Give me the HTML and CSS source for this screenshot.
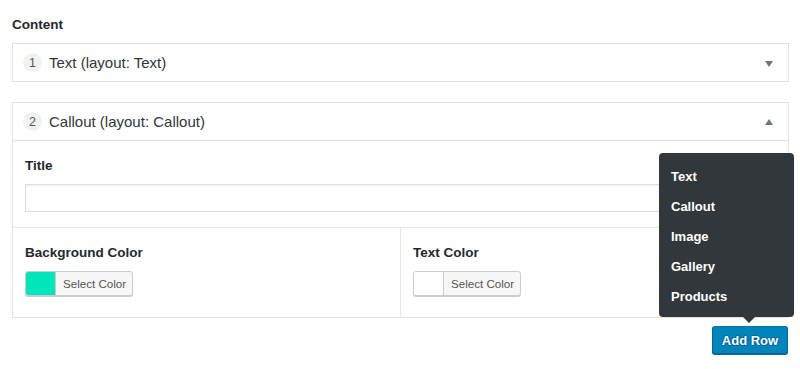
FILE: index.html
```html
<!DOCTYPE html>
<html>
<head>
<meta charset="utf-8">
<link rel="stylesheet" href="styles.css">
</head>
<body>
<div class="wrap">
  <div class="field-label">Content</div>

  <div class="layout">
    <div class="layout-head">
      <span class="order">1</span>
      <span class="layout-title">Text (layout: Text)</span>
      <span class="toggle down"></span>
    </div>
  </div>

  <div class="layout open">
    <div class="layout-head">
      <span class="order">2</span>
      <span class="layout-title">Callout (layout: Callout)</span>
      <span class="toggle up"></span>
    </div>
    <div class="sub-field">
      <div class="sub-label">Title</div>
      <input class="text-input" type="text">
    </div>
    <div class="sub-row">
      <div class="sub-field col">
        <div class="sub-label">Background Color</div>
        <button class="color-btn"><span class="swatch teal"></span><span class="color-text">Select Color</span></button>
      </div>
      <div class="sub-field col col-right">
        <div class="sub-label">Text Color</div>
        <button class="color-btn"><span class="swatch"></span><span class="color-text">Select Color</span></button>
      </div>
    </div>
  </div>

  <div class="actions">
    <div class="add-wrap">
      <ul class="popup">
        <li>Text</li>
        <li>Callout</li>
        <li>Image</li>
        <li>Gallery</li>
        <li>Products</li>
      </ul>
      <span class="popup-arrow"></span>
      <button class="add-row">Add Row</button>
    </div>
  </div>
</div>
</body>
</html>
```

FILE: styles.css
```css
* { box-sizing: border-box; }
html, body { margin: 0; padding: 0; background: #fff; }
body {
  font-family: "Liberation Sans", Arial, sans-serif;
  color: #23282d;
  width: 800px;
  height: 369px;
  overflow: hidden;
}
.wrap {
  padding: 16px 12px 0 12px;
  width: 789px;
}
.field-label {
  font-size: 13.5px;
  font-weight: bold;
  line-height: 18px;
  margin-bottom: 9px;
  color: #23282d;
}
.layout {
  border: 1px solid #e1e1e1;
  background: #fff;
  width: 777px;
}
.layout + .layout { margin-top: 20px; }
.layout-head {
  height: 37px;
  display: flex;
  align-items: center;
  padding-left: 10px;
  padding-right: 15px;
  font-size: 15px;
  color: #32373c;
}
.open .layout-head { border-bottom: 1px solid #e1e1e1; height: 38px; }
.order {
  width: 19px;
  height: 19px;
  border-radius: 50%;
  background: #f1f1f1;
  color: #555;
  font-size: 12.5px;
  display: flex;
  align-items: center;
  justify-content: center;
  margin-right: 7px;
}
.layout-title { flex: 1; }
.toggle {
  width: 0; height: 0;
  border-left: 4px solid transparent;
  border-right: 4px solid transparent;
}
.toggle.down { border-top: 6px solid #72777c; margin-top: 2px; }
.toggle.up { border-bottom: 6px solid #72777c; }
.sub-field {
  padding: 17px 12px 15px 12px;
}
.sub-label {
  font-size: 13.5px;
  font-weight: bold;
  line-height: 16px;
  margin-bottom: 10px;
  color: #23282d;
}
.text-input {
  display: block;
  width: 100%;
  height: 28px;
  border: 1px solid #ddd;
  box-shadow: inset 0 1px 2px rgba(0,0,0,.07);
  background: #fff;
  margin: 0;
  padding: 0 8px;
}
.sub-row {
  display: grid;
  grid-template-columns: 387px 1fr;
  border-top: 1px solid #e8e8e8;
}
.sub-field.col { padding-bottom: 21px; }
.col-right { border-left: 1px solid #e8e8e8; }
.color-btn {
  display: flex;
  align-items: stretch;
  height: 25px;
  padding: 0;
  margin: 0;
  border: 1px solid #ccc;
  border-radius: 3px;
  background: #f7f7f7;
  box-shadow: 0 1px 0 #ccc;
  font-family: "Liberation Sans", Arial, sans-serif;
  overflow: hidden;
}
.swatch {
  width: 30px;
  background: #fff;
  border-right: 1px solid #ccc;
}
.swatch.teal { background: #00e5b9; }
.color-text {
  display: flex;
  align-items: center;
  padding: 0 6px 0 7px;
  font-size: 11.6px;
  color: #555;
  line-height: 1;
}
.actions {
  display: flex;
  justify-content: flex-end;
  margin-top: 8px;
  width: 776px;
}
.add-wrap { position: relative; }
.add-row {
  display: block;
  height: 28px;
  width: 76px;
  padding: 0;
  margin: 0;
  background: #0085ba;
  border: 1px solid #0073aa;
  border-color: #0073aa #006799 #006799;
  border-radius: 3px;
  box-shadow: 0 1px 0 #006799;
  color: #fff;
  font-family: "Liberation Sans", Arial, sans-serif;
  font-size: 13px;
  font-weight: bold;
  text-shadow: 0 -1px 1px #006799, 1px 0 1px #006799, 0 1px 1px #006799, -1px 0 1px #006799;
}
.popup {
  position: absolute;
  right: -6px;
  bottom: calc(100% + 9px);
  width: 135px;
  margin: 0;
  padding: 9px 0 5px 0;
  list-style: none;
  background: #32373c;
  border-radius: 4px;
}
.popup li {
  height: 30px;
  line-height: 30px;
  padding-left: 12px;
  color: #fff;
  font-size: 13px;
  font-weight: bold;
}
.popup-arrow {
  position: absolute;
  left: 31px;
  bottom: calc(100% + 3px);
  width: 0; height: 0;
  border-left: 6px solid transparent;
  border-right: 6px solid transparent;
  border-top: 6px solid #32373c;
}
```
